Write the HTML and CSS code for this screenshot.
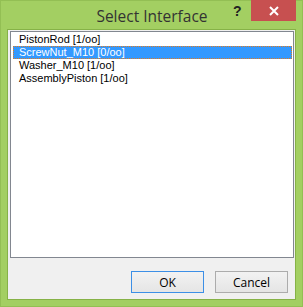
FILE: index.html
```html
<!DOCTYPE html>
<html lang="en">
<head>
    <meta charset="UTF-8">
    <meta name="viewport" content="width=device-width, initial-scale=1.0">
    <title>Select Interface</title>
    <link rel="stylesheet" href="styles.css">
</head>
<body>
    <div class="window">
        <div class="titlebar">
            <span class="title">Select Interface</span>
            <span class="help">?</span>
            <span class="close">
                <svg width="10" height="10" viewBox="0 0 10 10">
                    <path d="M1 1 L9 9 M9 1 L1 9" stroke="#fff" stroke-width="2" />
                </svg>
            </span>
        </div>

        <div class="client">
            <ul class="list">
                <li>PistonRod [1/oo]</li>
                <li class="selected">ScrewNut_M10 [0/oo]</li>
                <li>Washer_M10 [1/oo]</li>
                <li>AssemblyPiston [1/oo]</li>
            </ul>
            <div class="buttons">
                <button class="btn default">OK</button>
                <button class="btn">Cancel</button>
            </div>
        </div><!-- .client END -->
    </div>
</body>
</html>
```

FILE: styles.css
```css
* {
    margin: 0;
    padding: 0;
    box-sizing: border-box;
}
body {
    width: 303px;
    height: 307px;
    overflow: hidden;
}
.window {
    width: 303px;
    height: 307px;
    background-color: #a3cf62;
    border: 1px solid #93bf54;
    display: flex;
    flex-direction: column;
}
.titlebar {
    height: 28px;
    position: relative;
    display: flex;
    justify-content: center;
}
.title {
    font-family: "Open Sans", "Liberation Sans", sans-serif;
    font-size: 15.5px;
    color: #333;
    line-height: 30px;
    margin-left: 1px;
}
.help {
    position: absolute;
    top: 2px;
    left: 232px;
    font-family: "Liberation Sans", sans-serif;
    font-weight: bold;
    font-size: 14px;
    color: #222;
}
.close {
    position: absolute;
    top: -1px;
    left: 250px;
    width: 45px;
    height: 21px;
    background-color: #c75050;
    display: flex;
    align-items: center;
    justify-content: center;
}
.close svg {
    display: block;
}
.client {
    margin: 0 6px 6px 6px;
    flex: 1;
    background-color: #f0f0f0;
    border: 1px solid #86b247;
    padding: 1px 1px 6px 2px;
    display: flex;
    flex-direction: column;
}
.list {
    list-style: none;
    height: 227px;
    background-color: #fff;
    border: 1px solid #828790;
    padding: 1px 1px 0 2px;
    font-family: "Liberation Sans", sans-serif;
    font-size: 11px;
    color: #000;
}
.list li {
    height: 13px;
    line-height: 13px;
    padding-left: 6px;
}
.list li.selected {
    background-color: #3399ff;
    color: #fff;
    outline: 1px dotted #e07a20;
    outline-offset: -1px;
}
.buttons {
    margin-top: 13px;
    display: flex;
    justify-content: flex-end;
    gap: 11px;
    padding-right: 6px;
}
.btn {
    width: 73px;
    height: 22px;
    font-family: "Open Sans", "Liberation Sans", sans-serif;
    font-size: 12px;
    color: #000;
    background: linear-gradient(#f2f2f2, #e5e5e5);
    border: 1px solid #acacac;
}
.btn.default {
    border-color: #3c8fe6;
}
```
